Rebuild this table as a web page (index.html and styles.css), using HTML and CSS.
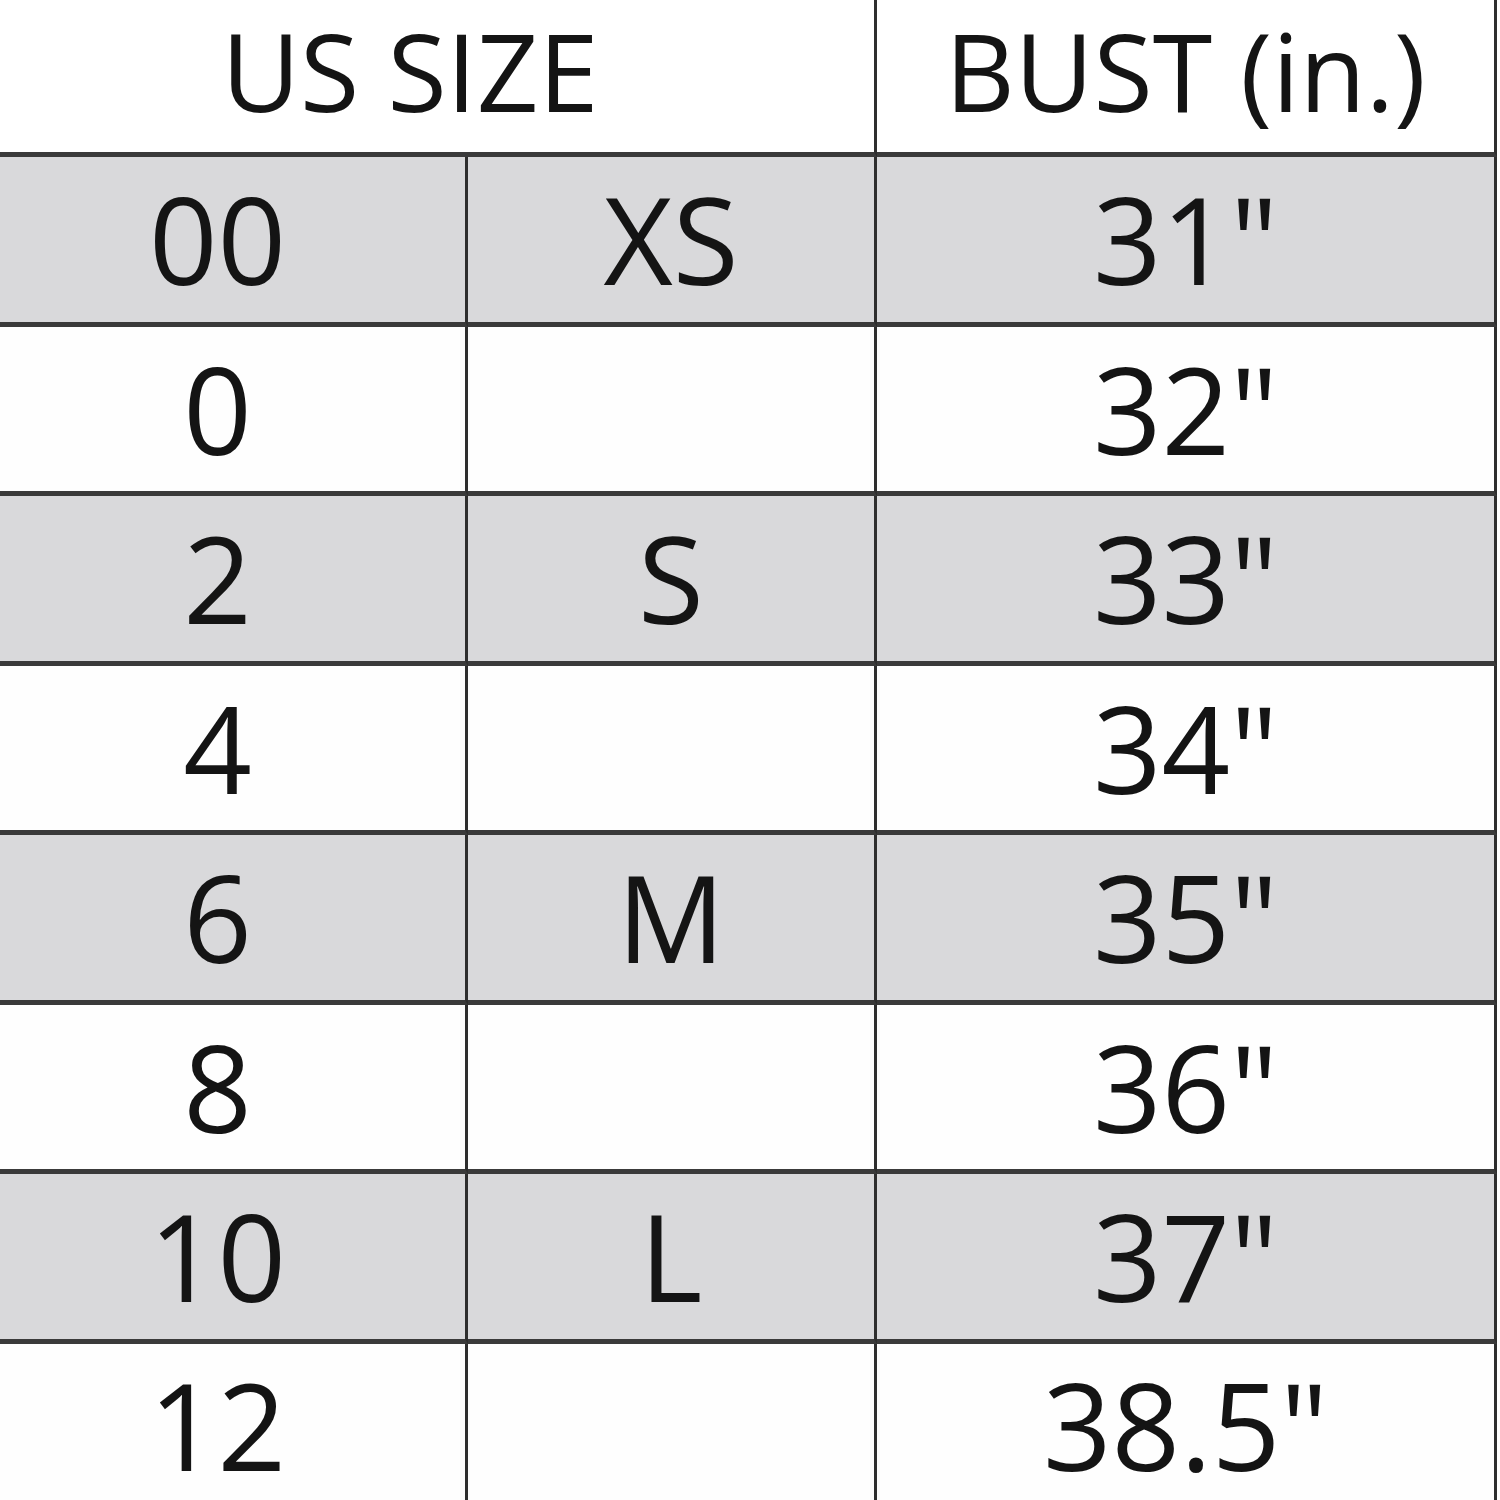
FILE: index.html
```html
<!DOCTYPE html>
<html lang="en">
<head>
<meta charset="utf-8">
<title>Size Chart</title>
<link rel="stylesheet" href="styles.css">
</head>
<body>
<div class="chart">
  <div class="cell head span2">US SIZE</div>
  <div class="cell head">BUST (in.)</div>

  <div class="cell shade">00</div>
  <div class="cell shade">XS</div>
  <div class="cell shade">31"</div>

  <div class="cell">0</div>
  <div class="cell"></div>
  <div class="cell">32"</div>

  <div class="cell shade">2</div>
  <div class="cell shade">S</div>
  <div class="cell shade">33"</div>

  <div class="cell">4</div>
  <div class="cell"></div>
  <div class="cell">34"</div>

  <div class="cell shade">6</div>
  <div class="cell shade">M</div>
  <div class="cell shade">35"</div>

  <div class="cell">8</div>
  <div class="cell"></div>
  <div class="cell">36"</div>

  <div class="cell shade">10</div>
  <div class="cell shade">L</div>
  <div class="cell shade">37"</div>

  <div class="cell last">12</div>
  <div class="cell last"></div>
  <div class="cell last">38.5"</div>
</div>
</body>
</html>
```

FILE: styles.css
```css
html, body {
  margin: 0;
  padding: 0;
  background: #ffffff;
}

body {
  width: 1500px;
  height: 1500px;
  overflow: hidden;
  font-family: "Open Sans", "Liberation Sans", sans-serif;
  color: #141414;
}

.chart {
  display: grid;
  grid-template-columns: 498px 409px 620px;
  grid-template-rows: 157px repeat(7, 169.5px) 156.5px;
  margin-left: -30px;
}

.cell {
  box-sizing: border-box;
  display: flex;
  align-items: center;
  justify-content: center;
  border-right: 3px solid #2e2e2e;
  border-bottom: 5px solid #3a3a3a;
  font-size: 120px;
  line-height: 1;
  background: #fefefe;
}

.cell.shade {
  background: #d9d9db;
}

.cell.last {
  border-bottom: none;
  padding-top: 6px;
}

.cell.head {
  font-size: 108px;
  padding-bottom: 10px;
  background: #ffffff;
}

.cell.span2 {
  grid-column: span 2;
  padding-right: 24px;
}
```
